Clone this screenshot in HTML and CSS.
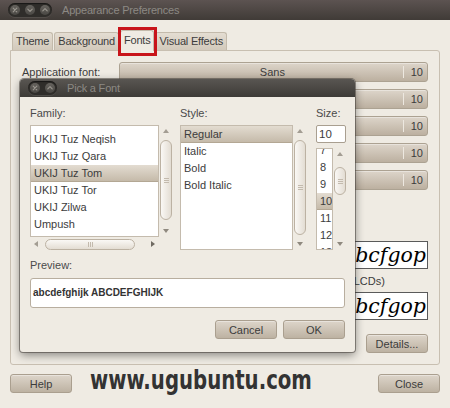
FILE: index.html
```html
<!DOCTYPE html>
<html>
<head>
<meta charset="utf-8">
<title>Appearance Preferences</title>
<link rel="stylesheet" href="styles.css">
</head>
<body>
<div class="window">
  <div class="titlebar">
    <div class="wbtns">
      <span class="wb"><svg viewBox="0 0 10 10"><path d="M3.2 3.2L6.8 6.8M6.8 3.2L3.2 6.8"/></svg></span>
      <span class="wb"><svg viewBox="0 0 10 10"><path d="M2.8 4.1L5 6.3L7.2 4.1"/></svg></span>
      <span class="wb"><svg viewBox="0 0 10 10"><path d="M2.8 5.9L5 3.7L7.2 5.9"/></svg></span>
    </div>
    <span class="title">Appearance Preferences</span>
  </div>

  <div class="main">
    <div class="tabs">
      <span class="tab">Theme</span><span class="tab">Background</span><span class="tab active">Fonts</span><span class="tab">Visual Effects</span>
    </div>
    <div class="panel">
      <div class="fontrows">
        <div class="frow"><span class="flabel">Application font:</span><button class="fbtn"><span class="fname">Sans</span><span class="fsize">10</span></button></div>
        <div class="frow"><span class="flabel">Document font:</span><button class="fbtn"><span class="fname">Sans</span><span class="fsize">10</span></button></div>
        <div class="frow"><span class="flabel">Desktop font:</span><button class="fbtn"><span class="fname">Sans</span><span class="fsize">10</span></button></div>
        <div class="frow"><span class="flabel">Window title font:</span><button class="fbtn"><span class="fname">Sans Bold</span><span class="fsize">10</span></button></div>
        <div class="frow"><span class="flabel">Fixed width font:</span><button class="fbtn"><span class="fname">Monospace</span><span class="fsize">10</span></button></div>
      </div>
      <div class="rendering">
        <div class="rhead">Rendering</div>
        <div class="rgrid">
          <div class="ropt">
            <div class="rlabel"><span class="radio"></span>Monochrome</div>
            <div class="sample"><span>abcfgop AO abcfgop</span></div>
          </div>
          <div class="ropt">
            <div class="rlabel"><span class="radio"></span>Best shapes</div>
            <div class="sample"><span>abcfgop AO abcfgop</span></div>
          </div>
          <div class="ropt">
            <div class="rlabel"><span class="radio"></span>Best contrast</div>
            <div class="sample"><span>abcfgop AO abcfgop</span></div>
          </div>
          <div class="ropt">
            <div class="rlabel"><span class="radio on"></span>Subpixel smoothing (LCDs)</div>
            <div class="sample"><span>abcfgop AO abcfgop</span></div>
          </div>
        </div>
      </div>
      <div class="details-row"><button class="btn">Details...</button></div>
    </div>
    <div class="bottom"><button class="btn">Help</button><button class="btn">Close</button></div>
  </div>

  <div class="highlight"></div>
  <div class="watermark">www.ugubuntu.com</div>

  <div class="dialog">
    <div class="dtitle">
      <div class="wbtns small">
        <span class="wb"><svg viewBox="0 0 10 10"><path d="M3.2 3.2L6.8 6.8M6.8 3.2L3.2 6.8"/></svg></span>
        <span class="wb"><svg viewBox="0 0 10 10"><path d="M2.8 5.9L5 3.7L7.2 5.9"/></svg></span>
      </div>
      <span class="title">Pick a Font</span>
    </div>
    <div class="dbody">
      <div class="cols">
        <div class="col col-family">
          <div class="lbl">Family:</div>
          <div class="lwrap fam">
            <div class="list">
              <div class="inner off12">
                <div class="item">UKIJ Tuz Kitab</div>
                <div class="item">UKIJ Tuz Neqish</div>
                <div class="item">UKIJ Tuz Qara</div>
                <div class="item sel">UKIJ Tuz Tom</div>
                <div class="item">UKIJ Tuz Tor</div>
                <div class="item">UKIJ Zilwa</div>
                <div class="item">Umpush</div>
                <div class="item">URW Bookman L</div>
              </div>
            </div>
            <div class="vs"><span class="arr up"></span><div class="trough"><div class="thumb t-fam"></div></div><span class="arr down"></span></div>
          </div>
          <div class="hs"><span class="arr left"></span><div class="htrough"><div class="hthumb"></div></div><span class="arr right"></span></div>
        </div>
        <div class="col col-style">
          <div class="lbl">Style:</div>
          <div class="lwrap sty">
            <div class="list">
              <div class="inner">
                <div class="item sel">Regular</div>
                <div class="item">Italic</div>
                <div class="item">Bold</div>
                <div class="item">Bold Italic</div>
              </div>
            </div>
            <div class="vs"><span class="arr up"></span><div class="trough"><div class="thumb t-sty"></div></div><span class="arr down"></span></div>
          </div>
        </div>
        <div class="col col-size">
          <div class="lbl">Size:</div>
          <div class="entry">10</div>
          <div class="lwrap siz">
            <div class="list">
              <div class="inner off8">
                <div class="item">7</div>
                <div class="item">8</div>
                <div class="item">9</div>
                <div class="item sel">10</div>
                <div class="item">11</div>
                <div class="item">12</div>
                <div class="item">13</div>
              </div>
            </div>
            <div class="vs"><span class="arr up"></span><div class="trough"><div class="thumb t-siz"></div></div><span class="arr down"></span></div>
          </div>
        </div>
      </div>
      <div class="lbl plbl">Preview:</div>
      <div class="preview">abcdefghijk ABCDEFGHIJK</div>
      <div class="dbtns"><button class="btn">Cancel</button><button class="btn">OK</button></div>
    </div>
  </div>
</div>
</body>
</html>
```

FILE: styles.css
```css
html, body {
  margin: 0;
  padding: 0;
}
body {
  background: #3c3b37;
  font-family: "Liberation Sans", Arial, sans-serif;
  font-size: 11px;
  color: #3c3c3c;
}
button {
  font: inherit;
  color: inherit;
}

.window {
  position: relative;
  width: 450px;
  height: 408px;
  background: #efebe3;
  overflow: hidden;
  display: flex;
  flex-direction: column;
}

/* title bars */
.titlebar {
  height: 20px;
  flex: none;
  display: flex;
  align-items: center;
  background: linear-gradient(#5c5351, #403b37);
}
.wbtns {
  margin-left: 8px;
  display: flex;
  gap: 5px;
  padding: 2px;
  background: #2f2d2a;
  border-radius: 8px;
  box-shadow: inset 0 1px 1px rgba(0,0,0,.5), 0 1px 0 rgba(255,255,255,.08);
}
.wb {
  width: 10px;
  height: 10px;
  border-radius: 50%;
  background: linear-gradient(#66635e, #4a4844);
  display: flex;
}
.wb svg {
  width: 10px;
  height: 10px;
  fill: none;
  stroke: #9a968f;
  stroke-width: 1.2;
  stroke-linecap: round;
  stroke-linejoin: round;
}
.title {
  margin-left: 10px;
  color: #8c8984;
  font-size: 11px;
  letter-spacing: -0.2px;
}

/* main window */
.main {
  flex: 1;
  display: flex;
  flex-direction: column;
  padding: 12px 10px 0;
}
.tabs {
  display: flex;
  align-items: flex-end;
  height: 18px;
  padding-left: 2px;
  gap: 1px;
}
.tab {
  height: 18px;
  line-height: 17px;
  padding: 0 3px;
  box-sizing: border-box;
  background: linear-gradient(#e4ddd2, #d2c9bb);
  border: 1px solid #c3baab;
  border-bottom: none;
  border-radius: 3px 3px 0 0;
  letter-spacing: -0.2px;
  white-space: nowrap;
}
.tab.active {
  height: 21px;
  line-height: 19px;
  margin-bottom: -1px;
  background: #efebe3;
  position: relative;
  z-index: 1;
}
.panel {
  height: 315px;
  box-sizing: border-box;
  border: 1px solid #c8bfb1;
  border-radius: 0 3px 3px 3px;
  padding: 11px 11px 12px;
  display: flex;
  flex-direction: column;
}
.fontrows {
  display: flex;
  flex-direction: column;
  gap: 7px;
}
.frow {
  display: flex;
  align-items: center;
  height: 20px;
}
.flabel {
  width: 97px;
  flex: none;
}
.fbtn {
  flex: 1;
  height: 20px;
  display: flex;
  align-items: center;
  padding: 0;
  border: 1px solid #aca292;
  border-radius: 3px;
  background: linear-gradient(#ddd5ca, #bcb0a0);
  box-shadow: inset 0 1px 0 rgba(255,255,255,.35);
}
.fname {
  flex: 1;
  text-align: center;
  padding-left: 22px;
}
.fsize {
  border-left: 1px solid #ede8e0;
  line-height: 12px;
  padding: 0 4px 0 7px;
}
.rendering {
  margin-top: 11px;
}
.rhead {
  height: 14px;
  line-height: 14px;
  font-weight: bold;
}
.rgrid {
  margin-top: 8px;
  display: grid;
  grid-template-columns: 211px minmax(0, 1fr);
  row-gap: 5px;
}
.ropt {
  min-width: 0;
}
.rlabel {
  height: 14px;
  line-height: 14px;
  margin-bottom: 4px;
  display: flex;
  align-items: center;
  gap: 4px;
  white-space: nowrap;
}
.radio {
  width: 11px;
  height: 11px;
  margin-left: 1px;
  border-radius: 50%;
  border: 1px solid #9a8f80;
  background: #f6f3ee;
}
.sample {
  height: 28px;
  min-width: 0;
  box-sizing: border-box;
  margin-left: 17px;
  border: 1px solid #5a5a5a;
  background: #fff;
  overflow: hidden;
  display: flex;
  justify-content: flex-end;
  align-items: center;
  padding-right: 1px;
  white-space: nowrap;
  font-family: "DejaVu Serif", serif;
  font-style: italic;
  font-size: 20.5px;
  color: #000;
}
.sample span {
  flex: none;
}
.details-row {
  margin-top: 14px;
  display: flex;
  justify-content: flex-end;
}
.btn {
  width: 62px;
  height: 19px;
  padding: 0;
  border: 1px solid #aa9f8f;
  border-radius: 3px;
  background: linear-gradient(#ddd5ca, #bdb2a2);
  box-shadow: inset 0 1px 0 rgba(255,255,255,.35);
}
.bottom {
  margin-top: 9px;
  display: flex;
  justify-content: space-between;
}

/* overlays */
.highlight {
  position: absolute;
  left: 118px;
  top: 27px;
  width: 39px;
  height: 29px;
  box-sizing: border-box;
  border: 3px solid #c8141a;
  z-index: 3;
}
.watermark {
  position: absolute;
  left: 90px;
  top: 364px;
  font-family: "DejaVu Sans", sans-serif;
  font-weight: bold;
  font-size: 27px;
  line-height: 32px;
  color: #333;
  transform: scaleX(.73);
  transform-origin: left top;
  white-space: nowrap;
  z-index: 2;
}

/* dialog */
.dialog {
  position: absolute;
  left: 20px;
  top: 79px;
  width: 335px;
  height: 273px;
  background: #efebe3;
  border-radius: 4px 4px 3px 3px;
  box-shadow: 0 0 0 1px rgba(70,64,58,.55), 0 3px 10px rgba(0,0,0,.45);
  display: flex;
  flex-direction: column;
  z-index: 4;
}
.dtitle {
  height: 18px;
  flex: none;
  display: flex;
  align-items: center;
  background: linear-gradient(#595652, #3d3b37);
  border-radius: 4px 4px 0 0;
}
.wbtns.small {
  margin-left: 8px;
}
.dbody {
  flex: 1;
  padding: 9px 10px 13px;
  display: flex;
  flex-direction: column;
}
.cols {
  display: flex;
  height: 144px;
}
.col {
  flex: none;
  display: flex;
  flex-direction: column;
}
.col-family { width: 143px; margin-right: 7px; }
.col-style { width: 127px; margin-right: 9px; }
.col-size { width: 31px; }
.lbl {
  height: 14px;
  line-height: 14px;
  margin-bottom: 5px;
  color: #4a4a4a;
}
.lwrap {
  display: flex;
}
.lwrap.fam { height: 112px; }
.lwrap.sty { height: 125px; }
.lwrap.siz { height: 102px; }
.list {
  flex: 1;
  background: #fff;
  border: 1px solid #c4bbad;
  overflow: hidden;
  box-sizing: border-box;
}
.inner.off12 { margin-top: -12px; }
.inner.off8 { margin-top: -7px; }
.item {
  height: 17px;
  line-height: 17px;
  padding-left: 3px;
  white-space: nowrap;
}
.item.sel {
  background: linear-gradient(#e3dcd1, #c3b8a7);
  box-shadow: inset 0 -1px 0 #b3a794;
}
.entry {
  height: 18px;
  width: 30px;
  box-sizing: border-box;
  border: 1px solid #a99f90;
  border-radius: 2px;
  background: #fff;
  line-height: 16px;
  padding-left: 2px;
  margin-bottom: 5px;
  font-size: 11.5px;
}
.vs {
  width: 14px;
  flex: none;
  display: flex;
  flex-direction: column;
  align-items: center;
}
.arr {
  flex: none;
  height: 12px;
  width: 12px;
  display: flex;
  align-items: center;
  justify-content: center;
}
.arr::before {
  content: "";
  width: 0;
  height: 0;
}
.arr.up::before {
  border-left: 3px solid transparent;
  border-right: 3px solid transparent;
  border-bottom: 4px solid #a39d93;
}
.arr.down::before {
  border-left: 3px solid transparent;
  border-right: 3px solid transparent;
  border-top: 4px solid #8f897f;
}
.arr.left::before {
  border-top: 3px solid transparent;
  border-bottom: 3px solid transparent;
  border-right: 4px solid #a39d93;
}
.arr.right::before {
  border-top: 3px solid transparent;
  border-bottom: 3px solid transparent;
  border-left: 4px solid #6f6a62;
}
.trough {
  flex: 1;
  width: 100%;
  display: flex;
  flex-direction: column;
  align-items: center;
}
.thumb {
  width: 12px;
  box-sizing: border-box;
  border: 1px solid #bcb2a3;
  border-radius: 6px;
  background: linear-gradient(to right, #faf8f5, #e3ddd3);
  display: flex;
  align-items: center;
  justify-content: center;
}
.thumb::before {
  content: "";
  width: 5px;
  height: 5px;
  background: repeating-linear-gradient(#c3baad 0 1px, transparent 1px 2px);
}
.t-fam { margin-top: 3px; height: 80px; }
.t-sty { margin-top: 3px; height: 95px; }
.t-siz { margin-top: 7px; height: 28px; }
.hs {
  margin-top: 1px;
  width: 129px;
  height: 12px;
  display: flex;
  align-items: center;
}
.htrough {
  flex: 1;
  display: flex;
  align-items: center;
}
.hthumb {
  margin-left: 3px;
  width: 90px;
  height: 11px;
  box-sizing: border-box;
  border: 1px solid #bcb2a3;
  border-radius: 6px;
  background: linear-gradient(#faf8f5, #e3ddd3);
  display: flex;
  align-items: center;
  justify-content: center;
}
.hthumb::before {
  content: "";
  width: 5px;
  height: 5px;
  background: repeating-linear-gradient(to right, #c3baad 0 1px, transparent 1px 2px);
}
.plbl {
  margin-top: 8px;
  margin-bottom: 6px;
}
.preview {
  height: 30px;
  box-sizing: border-box;
  border: 1px solid #b8ae9f;
  border-radius: 3px;
  background: #fff;
  line-height: 28px;
  padding-left: 2px;
  font-weight: bold;
  font-size: 10px;
  color: #333;
}
.dbtns {
  margin-top: 12px;
  display: flex;
  justify-content: flex-end;
  gap: 6px;
}
```
